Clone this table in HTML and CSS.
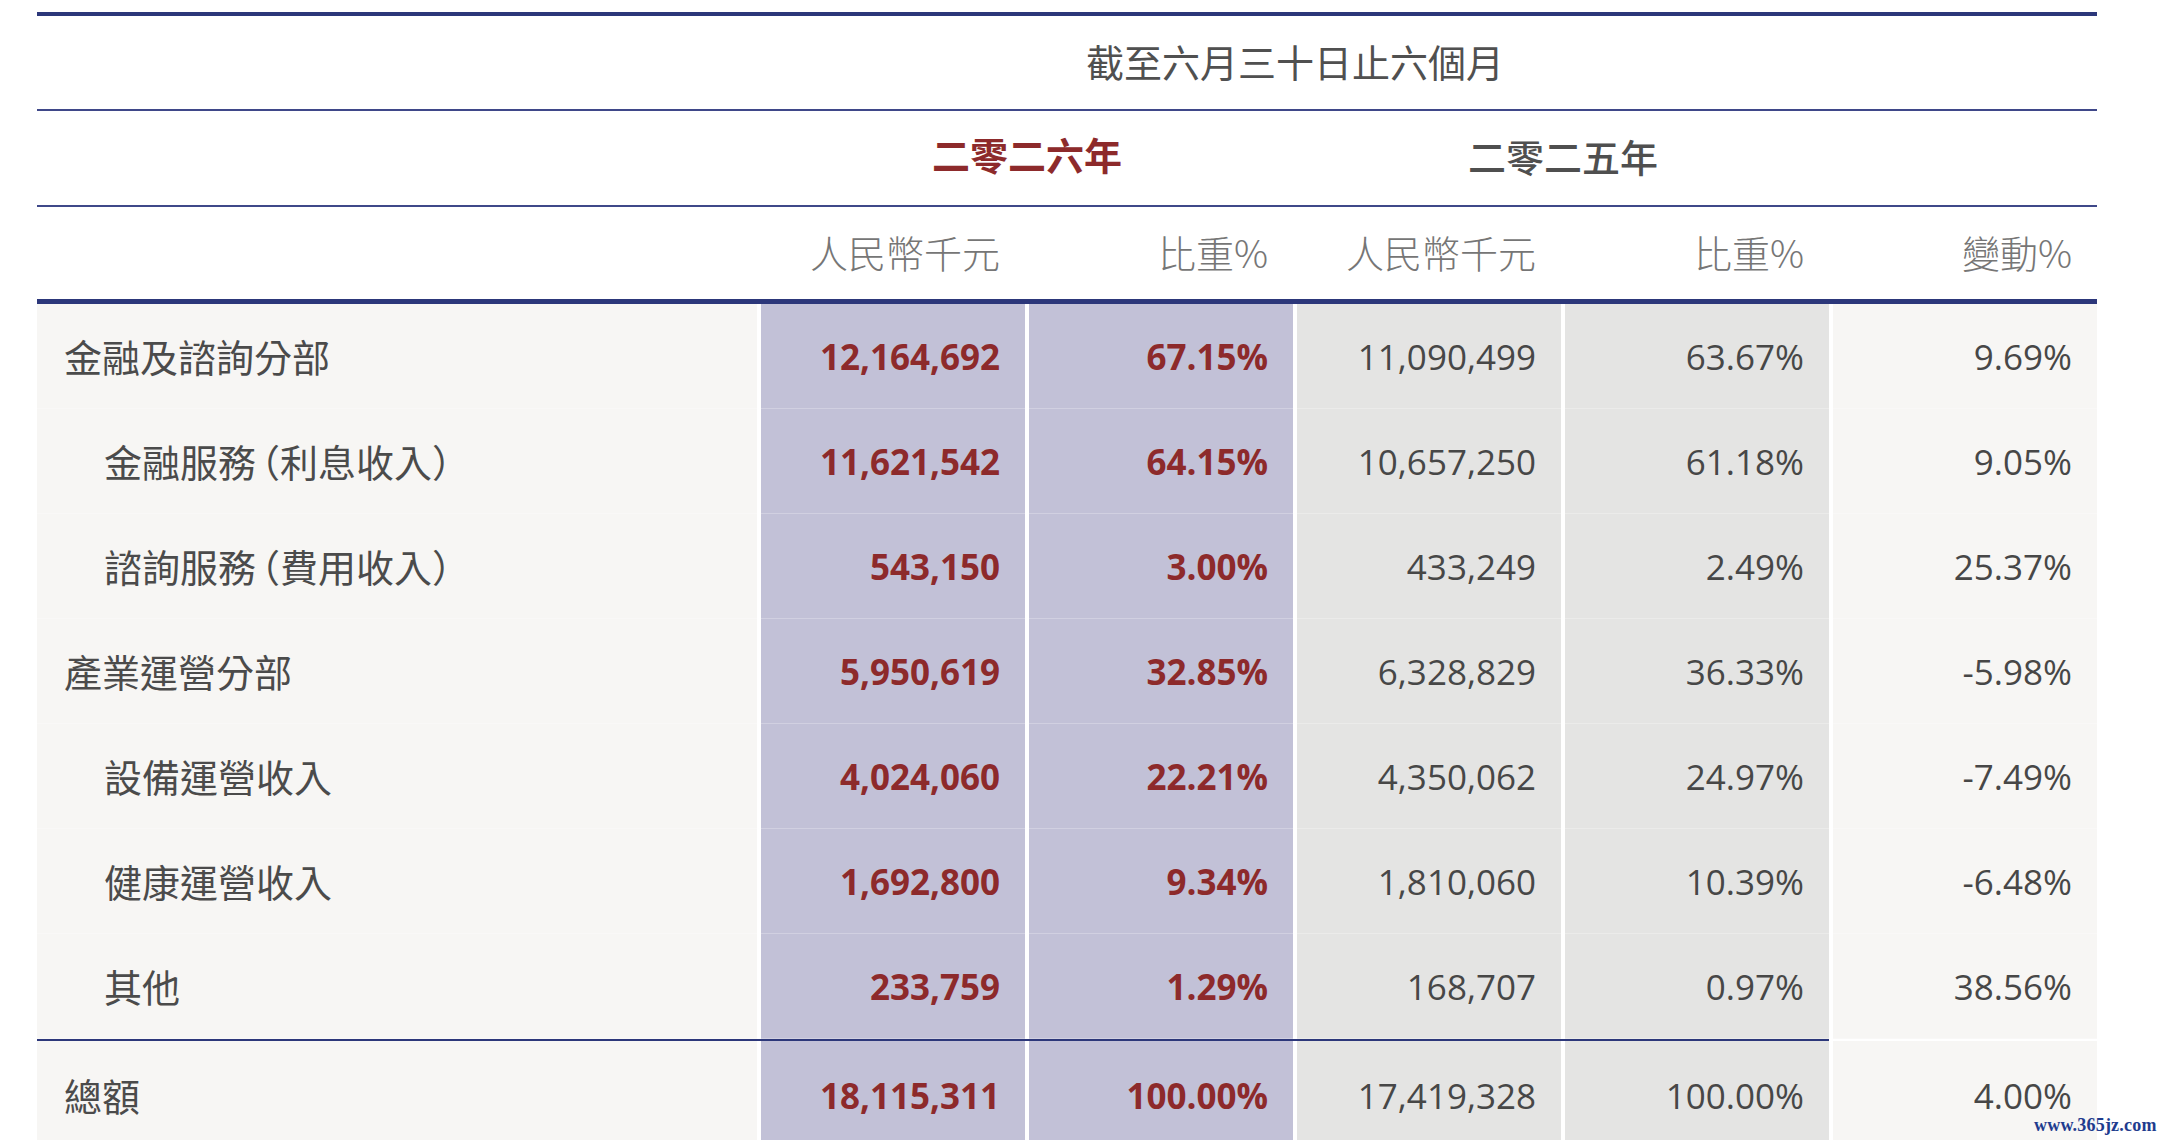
FILE: index.html
```html
<!DOCTYPE html>
<html lang="zh-Hant">
<head>
<meta charset="utf-8">
<title>分部收入</title>
<link rel="stylesheet" href="styles.css">
</head>
<body>
<div class="sheet">
  <div class="row head h1">
    <div class="cell"></div>
    <div class="cell span4 center">截至六月三十日止六個月</div>
    <div class="cell"></div>
  </div>
  <div class="row head h2">
    <div class="cell"></div>
    <div class="cell span2 center cur">二零二六年</div>
    <div class="cell span2 center prev">二零二五年</div>
    <div class="cell"></div>
  </div>
  <div class="row head h3">
    <div class="cell"></div>
    <div class="cell num-h">人民幣千元</div>
    <div class="cell num-h">比重%</div>
    <div class="cell num-h">人民幣千元</div>
    <div class="cell num-h">比重%</div>
    <div class="cell num-h">變動%</div>
  </div>

  <div class="row body">
    <div class="cell label">金融及諮詢分部</div>
    <div class="cell num hl a">12,164,692</div>
    <div class="cell num hl a">67.15%</div>
    <div class="cell num b">11,090,499</div>
    <div class="cell num b">63.67%</div>
    <div class="cell num c">9.69%</div>
  </div>
  <div class="row body">
    <div class="cell label sub">金融服務<span class="p open">（</span>利息收入<span class="p">）</span></div>
    <div class="cell num hl a">11,621,542</div>
    <div class="cell num hl a">64.15%</div>
    <div class="cell num b">10,657,250</div>
    <div class="cell num b">61.18%</div>
    <div class="cell num c">9.05%</div>
  </div>
  <div class="row body">
    <div class="cell label sub">諮詢服務<span class="p open">（</span>費用收入<span class="p">）</span></div>
    <div class="cell num hl a">543,150</div>
    <div class="cell num hl a">3.00%</div>
    <div class="cell num b">433,249</div>
    <div class="cell num b">2.49%</div>
    <div class="cell num c">25.37%</div>
  </div>
  <div class="row body">
    <div class="cell label">產業運營分部</div>
    <div class="cell num hl a">5,950,619</div>
    <div class="cell num hl a">32.85%</div>
    <div class="cell num b">6,328,829</div>
    <div class="cell num b">36.33%</div>
    <div class="cell num c">-5.98%</div>
  </div>
  <div class="row body">
    <div class="cell label sub">設備運營收入</div>
    <div class="cell num hl a">4,024,060</div>
    <div class="cell num hl a">22.21%</div>
    <div class="cell num b">4,350,062</div>
    <div class="cell num b">24.97%</div>
    <div class="cell num c">-7.49%</div>
  </div>
  <div class="row body">
    <div class="cell label sub">健康運營收入</div>
    <div class="cell num hl a">1,692,800</div>
    <div class="cell num hl a">9.34%</div>
    <div class="cell num b">1,810,060</div>
    <div class="cell num b">10.39%</div>
    <div class="cell num c">-6.48%</div>
  </div>
  <div class="row body">
    <div class="cell label sub">其他</div>
    <div class="cell num hl a">233,759</div>
    <div class="cell num hl a">1.29%</div>
    <div class="cell num b">168,707</div>
    <div class="cell num b">0.97%</div>
    <div class="cell num c">38.56%</div>
  </div>
  <div class="row total">
    <div class="cell label">總額</div>
    <div class="cell num hl a">18,115,311</div>
    <div class="cell num hl a">100.00%</div>
    <div class="cell num b">17,419,328</div>
    <div class="cell num b">100.00%</div>
    <div class="cell num c">4.00%</div>
  </div>
</div>
<div class="watermark">www.365jz.com</div>
</body>
</html>
```

FILE: styles.css
```css
html, body {
  margin: 0;
  padding: 0;
  background: #ffffff;
  overflow: hidden;
}

body {
  font-family: "Noto Sans CJK TC", "Noto Sans CJK SC", sans-serif;
  color: #4a4a4a;
}

.sheet {
  width: 2060px;
  margin: 12px 0 0 37px;
  border-top: 4px solid #2c377a;
}

.row {
  display: grid;
  grid-template-columns: 720px repeat(5, 264px);
  column-gap: 4px;
}

.cell {
  display: flex;
  align-items: center;
  box-sizing: border-box;
  font-size: 38px;
  line-height: 1;
}

.head .cell {
  background: #ffffff;
}

.h1 {
  height: 93px;
  border-bottom: 2px solid #3f4889;
}

.h2 {
  height: 94px;
  border-bottom: 2px solid #3f4889;
}

.h3 {
  height: 92px;
  border-bottom: 5px solid #2c377a;
}

.span4 {
  grid-column: 2 / 6;
}

.span2 {
  grid-column: span 2;
}

.center {
  justify-content: center;
}

.h1 .cell {
  color: #505050;
  padding-bottom: 4px;
}

.cur {
  color: #8d2a2b;
  font-weight: 700;
  padding-bottom: 8px;
}

.prev {
  color: #4f4f4f;
  font-weight: 500;
  padding-bottom: 4px;
}

.num-h {
  justify-content: flex-end;
  padding-right: 25px;
  color: #767676;
  font-weight: 300;
  padding-bottom: 2px;
}

.body .cell {
  height: 105px;
  border-bottom: 1px solid rgba(255, 255, 255, 0.25);
}

.label {
  background: #f7f6f4;
  padding-left: 27px;
  color: #4b4b4b;
}

.label.sub {
  padding-left: 67px;
}

.p {
  font-feature-settings: "halt" 1;
}

.p.open {
  margin-left: 5px;
}

.num {
  justify-content: flex-end;
  padding-right: 25px;
  font-family: "Open Sans", "Noto Sans", sans-serif;
  font-size: 35px;
  color: #474747;
}

.a {
  background: #c2c1d7;
}

.hl {
  color: #8d2a2b;
  font-weight: 700;
}

.b {
  background: #e4e4e3;
}

.c {
  background: #f7f6f4;
}

.total {
  padding-top: 2px;
  background: linear-gradient(#2c377a, #2c377a) no-repeat left top / 1792px 2px;
}

.total .cell {
  height: 100px;
  padding-top: 8px;
}

.watermark {
  position: absolute;
  left: 2034px;
  top: 1116px;
  font-family: "Liberation Serif", serif;
  font-weight: 700;
  font-size: 18px;
  line-height: 1;
  letter-spacing: 0.2px;
  color: #1f3c8e;
}
```
